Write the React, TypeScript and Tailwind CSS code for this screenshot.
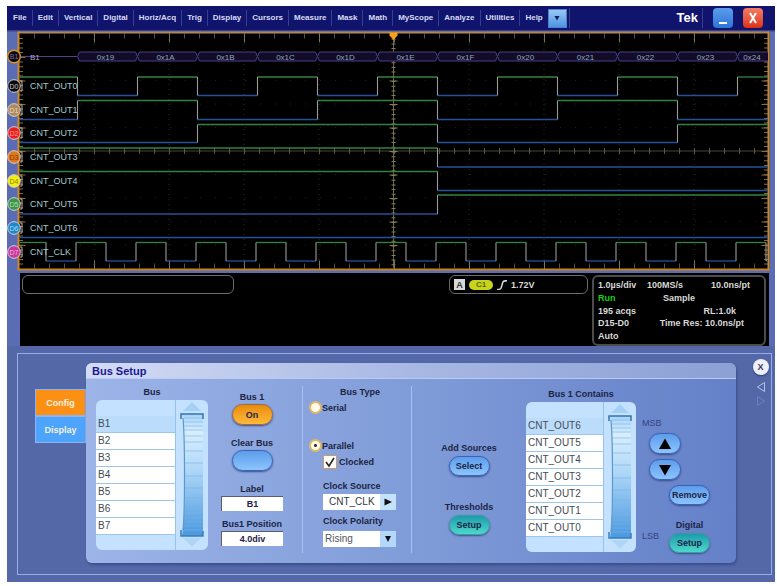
import React, { useState } from "react";

const MENUS = [
  "File", "Edit", "Vertical", "Digital", "Horiz/Acq", "Trig", "Display", "Cursors",
  "Measure", "Mask", "Math", "MyScope", "Analyze", "Utilities", "Help",
];

const LEFT = 20;
const RIGHT = 768;

type Channel = {
  id: string;
  label: string;
  y: number;
  fill: string;
  ink: string;
  high: number;
  low: number;
  startHigh: boolean;
  edges: number[];
};

const every = (start: number, step: number, count: number) =>
  Array.from({ length: count }, (_, i) => start + i * step);

const CHANNELS: Channel[] = [
  { id: "D0", label: "CNT_OUT0", y: 86, fill: "#0a0a0a", ink: "#c8c8c8", high: 77, low: 95.5, startHigh: true, edges: every(77.5, 60, 12) },
  { id: "D1", label: "CNT_OUT1", y: 110, fill: "#b08a5c", ink: "#ead9bd", high: 100.5, low: 119.5, startHigh: false, edges: every(77.5, 120, 6) },
  { id: "D2", label: "CNT_OUT2", y: 133, fill: "#e8201c", ink: "#ff9a90", high: 124.5, low: 142.5, startHigh: false, edges: every(197.5, 240, 3) },
  { id: "D3", label: "CNT_OUT3", y: 157, fill: "#e07818", ink: "#8a3c00", high: 148, low: 167, startHigh: true, edges: [437.5] },
  { id: "D4", label: "CNT_OUT4", y: 181, fill: "#f4ee10", ink: "#8a8400", high: 171.5, low: 190.5, startHigh: true, edges: [437.5] },
  { id: "D5", label: "CNT_OUT5", y: 204, fill: "#3c9448", ink: "#b0e0b0", high: 195, low: 214, startHigh: false, edges: [437.5] },
  { id: "D6", label: "CNT_OUT6", y: 228, fill: "#1c88c8", ink: "#a8dcf8", high: 218, low: 237.5, startHigh: false, edges: [] },
  { id: "D7", label: "CNT_CLK", y: 252, fill: "#c8389c", ink: "#f4b0e0", high: 242.5, low: 261, startHigh: true, edges: every(46, 30, 25) },
];

const BUS_VALUES = ["0x19", "0x1A", "0x1B", "0x1C", "0x1D", "0x1E", "0x1F", "0x20", "0x21", "0x22", "0x23", "0x24"];

function Trace({ ch }: { ch: Channel }) {
  const xs = [LEFT, ...ch.edges, RIGHT];
  return (
    <g fill="none">
      {xs.slice(0, -1).map((x, i) => {
        const high = i % 2 === 0 ? ch.startHigh : !ch.startHigh;
        const y = high ? ch.high : ch.low;
        return <path key={x} d={`M${x} ${y}H${xs[i + 1]}`} stroke={high ? "#37803f" : "#27509a"} strokeWidth="1.3" />;
      })}
      {ch.edges.map((x) => (
        <path key={x} d={`M${x} ${ch.high}V${ch.low}`} stroke="#9a9a9a" strokeWidth="1.1" />
      ))}
    </g>
  );
}

function Graticule() {
  return (
    <g fill="none">
      {every(94, 75, 9).map((x) => (
        <path key={x} d={`M${x} 34V268`} stroke="#2c2c22" strokeDasharray="1 4" />
      ))}
      {every(57, 23.5, 9).map((y) => (
        <path key={y} d={`M20 ${y}H768`} stroke="#24201a" strokeDasharray="1 14" />
      ))}
      <path d="M20 151H768" stroke="#5c5840" strokeWidth="0.8" />
      <path d="M393.5 34V268" stroke="#6c6644" strokeWidth="1" />
      <path d="M20 151H768" stroke="#5c5846" strokeWidth="6" strokeDasharray="1 14" strokeDashoffset="-14" />
      <path d="M393.5 34V268" stroke="#857e56" strokeWidth="4" strokeDasharray="1 3.7" />
      <path d="M393.5 57V268" stroke="#857e56" strokeWidth="8" strokeDasharray="1 22.5" />
      <path d="M34 36H768M34 266H768" stroke="#57533f" strokeWidth="5" strokeDasharray="1 14" />
      <path d="M94 38H768M94 265H768" stroke="#7a755c" strokeWidth="9" strokeDasharray="1 74" />
      <path d="M21 38V268M766 38V268" stroke="#8a6c38" strokeWidth="4" strokeDasharray="1 3.7" />
      <path d="M22 57V268M765 57V268" stroke="#8a6c38" strokeWidth="7" strokeDasharray="1 22.5" />
    </g>
  );
}

function Waveforms() {
  return (
    <svg viewBox="7 30 768 243" className="block w-full bg-[#5a6cb4] font-['Liberation_Sans',Arial,sans-serif]" role="img" aria-label="Digital channels">
      <rect x="7" y="30" width="768" height="1.5" fill="#3a4088" />
      <rect x="18.5" y="32.5" width="751" height="237" fill="#000" />
      <Graticule />
      <path d="M18.5 32.5H769" stroke="#b0875a" strokeWidth="2" />
      <path d="M18.5 31.5V270M768.5 31.5V270" stroke="#c98a2c" strokeWidth="2" />
      <path d="M17.5 269.5H769.5" stroke="#c8841c" strokeWidth="2" />
      <path d="M389.5 32.5h8v3l-4 4.5l-4-4.5z" fill="#f8a018" />

      <path d="M20 56.5H77" stroke="#5c3c8c" strokeWidth="1.2" />
      {BUS_VALUES.map((v, i) => {
        const x = 77.5 + i * 60;
        const end = Math.min(x + 60, RIGHT);
        const last = i === BUS_VALUES.length - 1;
        return (
          <g key={v}>
            <path
              d={last ? `M${end} 52H${x + 2}L${x} 56.5L${x + 2} 61H${end}` : `M${x} 56.5L${x + 2} 52H${end - 2}L${end} 56.5L${end - 2} 61H${x + 2}Z`}
              fill="#120c28"
              stroke="#4a3e90"
            />
            <text x={last ? 752 : x + 28} y="59.5" textAnchor="middle" fontSize="8" fill="#8fa5b5">{v}</text>
          </g>
        );
      })}
      <text x="30" y="60" fontSize="8" fill="#a9a4cc">B1</text>

      {CHANNELS.map((ch) => <Trace key={ch.id} ch={ch} />)}
      {CHANNELS.map((ch) => (
        <g key={ch.id}>
          <path d={`M20 ${ch.y - 5}h2v10h-2`} stroke="#b8b0a0" fill="none" />
          <circle cx="14" cy={ch.y} r="6.3" fill={ch.fill} stroke="#d8d0d4" strokeWidth="1" />
          <text x="14" y={ch.y + 2.5} textAnchor="middle" fontSize="7" fill={ch.ink}>{ch.id}</text>
          <text x="30" y={ch.y + 3} fontSize="9" fill="#a4c8d0">{ch.label}</text>
        </g>
      ))}
      <circle cx="14" cy="56.5" r="6.3" fill="#0a0a10" stroke="#e0941c" strokeWidth="1.4" />
      <text x="14" y="59" textAnchor="middle" fontSize="7" fill="#8468a8">B1</text>
    </svg>
  );
}

function Wheel() {
  return (
    <svg viewBox="0 0 33 150" className="block w-full" aria-hidden="true">
      <defs>
        <linearGradient id="wheel" x1="0" y1="0" x2="0" y2="1">
          <stop offset="0" stopColor="#a8d4f8" />
          <stop offset="0.15" stopColor="#d8eefe" />
          <stop offset="0.45" stopColor="#b0d8f8" />
          <stop offset="1" stopColor="#4a98e0" />
        </linearGradient>
      </defs>
      <path d="M0.5 0V150" stroke="#94c4ee" />
      <path d="M17 2L26 11H8Z" fill="#a4d0f4" />
      <path d="M17 147L26 138H8Z" fill="#b0d6f6" />
      <path d="M7 14H28V136H7C11 110 11 40 7 14Z" fill="url(#wheel)" />
      {[18, 22, 26, 30, 36, 42, 51, 63, 76, 88, 98, 108, 113, 118, 122, 126, 130].map((y) => (
        <path key={y} d={`M9 ${y}H28`} stroke="#7ab4e6" strokeWidth="0.6" />
      ))}
      <path d="M6 19V14H28V19" fill="none" stroke="#3674a8" strokeWidth="1.5" />
      <path d="M8 18C10 40 10 110 8 130" fill="none" stroke="#5c98c8" strokeWidth="1.2" />
      <path d="M6 130V136H28V131" fill="none" stroke="#3a7cb8" strokeWidth="1.5" />
    </svg>
  );
}

function PickList({ title, items }: { title: string; items: string[] }) {
  const [selected, setSelected] = useState(0);
  return (
    <section>
      <h3 className="text-center font-bold">{title}</h3>
      <div className="mt-0.5 flex h-[150px] overflow-hidden rounded-md bg-[#c4e2ff]">
        <ul className="min-w-0 flex-1 pt-4 text-[10px] text-[#444c54]">
          {items.map((item, i) => (
            <li key={item}>
              <button
                type="button"
                aria-pressed={i === selected}
                onClick={() => setSelected(i)}
                className={`block h-[17px] w-full border-b border-[#9cc6ea] pl-0.5 text-left leading-4 ${i === selected ? "bg-[#bcdcfc]" : "bg-white"}`}
              >
                {item}
              </button>
            </li>
          ))}
        </ul>
        <div className="w-[33px] shrink-0">
          <Wheel />
        </div>
      </div>
    </section>
  );
}

function Pill({ children, look, label }: { children?: React.ReactNode; look: string; label?: string }) {
  return (
    <button
      type="button"
      aria-label={label}
      className={`flex shrink-0 items-center justify-center rounded-full border font-bold shadow-[0_1px_2px_#3c4c8c] ${look}`}
    >
      {children}
    </button>
  );
}

const BLUE = "border-[#3c62b4] bg-linear-to-b from-[#5c9cec] to-[#8cc4fc]";
const TEAL = "border-[#3c9c9c] bg-linear-to-b from-[#1c9cac] to-[#4cd8cc]";
const FIELD = "h-[15px] w-[62px] border-t border-l border-[#5c5c6c] bg-white text-center text-[9px] font-bold";
const RADIO =
  "size-[13px] shrink-0 appearance-none rounded-full border-2 border-[#e0b868] bg-[#fffbe8] checked:bg-[radial-gradient(circle,#303030_0_1px,#fffbe8_2px)]";

function BusSettings() {
  return (
    <div className="flex min-w-0 flex-col items-center pt-[5px] pr-1.5">
      <span className="font-bold">Bus 1</span>
      <Pill look="mt-px h-[21px] w-[41px] border-[#9c6c3c] bg-linear-to-b from-[#e88c08] to-[#ffb838]">On</Pill>
      <span className="mt-3 font-bold">Clear Bus</span>
      <Pill label="Clear Bus" look={`mt-px h-[21px] w-[41px] ${BLUE}`} />
      <label htmlFor="bus-label" className="mt-3 font-bold">Label</label>
      <input id="bus-label" defaultValue="B1" className={`mt-px ${FIELD}`} />
      <label htmlFor="bus-position" className="mt-[7px] font-bold whitespace-nowrap">Bus1 Position</label>
      <input id="bus-position" defaultValue="4.0div" className={`mt-px ${FIELD}`} />
    </div>
  );
}

function BusType() {
  return (
    <div role="radiogroup" aria-labelledby="bus-type" className="min-w-0 border-l border-[#a8c0f0] pl-1.5">
      <h3 id="bus-type" className="text-center font-bold">Bus Type</h3>
      <label className="mt-[3px] flex h-[13px] items-center font-bold">
        <input type="radio" name="bus-type" className={RADIO} />
        Serial
      </label>
      <label className="mt-[25px] flex h-[13px] items-center font-bold">
        <input type="radio" name="bus-type" defaultChecked className={RADIO} />
        Parallel
      </label>
      <div className="pl-3.5">
        <label className="mt-[3px] flex h-3.5 items-center gap-0.5 font-bold">
          <span className="grid size-3.5 shrink-0">
            <input type="checkbox" defaultChecked className="peer col-start-1 row-start-1 size-3.5 appearance-none border border-[#c89c6c] bg-[#fffcf4]" />
            <svg viewBox="0 0 14 14" className="pointer-events-none invisible col-start-1 row-start-1 size-3.5 peer-checked:visible" aria-hidden="true">
              <path d="M3 7L6 11L11 3" fill="none" stroke="#282828" strokeWidth="1.6" />
            </svg>
          </span>
          Clocked
        </label>
        <div id="clock-source" className="mt-[11px] font-bold">Clock Source</div>
        <button type="button" aria-describedby="clock-source" className="mt-0.5 flex h-4 w-[73px] items-center bg-white pl-1.5 text-[10px] text-[#303840]">
          <span className="flex-1 text-left">CNT_CLK</span>
          <span className="flex h-full w-4 items-center justify-center bg-[#c4e2fc]">
            <svg viewBox="0 0 8 8" className="size-2" aria-hidden="true"><path d="M0.5 0.5L8 4L0.5 7.5Z" fill="#111" /></svg>
          </span>
        </button>
        <label htmlFor="clock-polarity" className="mt-[5px] block font-bold">Clock Polarity</label>
        <div className="relative mt-1 h-4 w-[73px] bg-white">
          <select id="clock-polarity" defaultValue="Rising" className="block h-4 w-full appearance-none bg-transparent pl-0.5 text-[10px] leading-4 text-[#505860]">
            <option>Rising</option>
            <option>Falling</option>
          </select>
          <span className="pointer-events-none absolute inset-y-0 right-0 flex w-4 items-center justify-center bg-[#b4d8fc]">
            <svg viewBox="0 0 8 8" className="size-2" aria-hidden="true"><path d="M1 1H7L4 7Z" fill="#111" /></svg>
          </span>
        </div>
      </div>
    </div>
  );
}

function SourceActions() {
  return (
    <div className="flex min-w-0 flex-col items-center border-l border-[#a8c0f0] pt-14">
      <span className="font-bold">Add Sources</span>
      <Pill look={`mt-0.5 h-5 w-[41px] ${BLUE}`}>Select</Pill>
      <span className="mt-[25px] font-bold">Thresholds</span>
      <Pill look={`mt-0.5 h-5 w-[41px] ${TEAL}`}>Setup</Pill>
    </div>
  );
}

function OrderActions() {
  return (
    <div className="min-w-0 pt-[31px] pl-1.5">
      <div className="text-[#34447c]">MSB</div>
      <div className="mt-1 flex flex-col gap-[5px] pl-[7px]">
        <Pill label="Move up" look={`h-[21px] w-8 ${BLUE}`}>
          <svg viewBox="0 0 12 12" className="size-3" aria-hidden="true"><path d="M6 0.5L12 11H0Z" fill="#000" /></svg>
        </Pill>
        <Pill label="Move down" look={`h-[21px] w-8 ${BLUE}`}>
          <svg viewBox="0 0 12 12" className="size-3" aria-hidden="true"><path d="M6 11.5L12 1H0Z" fill="#000" /></svg>
        </Pill>
      </div>
      <div className="mt-[5px] pl-[27px]">
        <Pill look={`h-5 w-[41px] ${BLUE}`}>Remove</Pill>
      </div>
      <div className="mt-3.5 flex">
        <span className="w-[27px] pt-[11px] text-[#34447c]">LSB</span>
        <div className="flex flex-col items-center">
          <span className="font-bold">Digital</span>
          <Pill look={`mt-0.5 h-5 w-[41px] ${TEAL}`}>Setup</Pill>
        </div>
      </div>
    </div>
  );
}

function MenuBar() {
  return (
    <header className="flex h-6 items-center bg-[#10146c] pl-px text-[8px] font-bold text-[#d8dcf4]">
      <nav className="flex">
        {MENUS.map((m) => (
          <button key={m} type="button" className="h-4 border-r border-[#34408c] px-[5px] last:border-0">{m}</button>
        ))}
      </nav>
      <button type="button" aria-label="More menus" className="flex size-[19px] items-center justify-center border border-[#4c84cc] bg-linear-to-b from-[#98c8f4] to-[#4c94e0]">
        <svg viewBox="0 0 8 8" className="size-2" aria-hidden="true"><path d="M1.5 2H6.5L4 6.5Z" fill="#101c5c" /></svg>
      </button>
      <span className="ml-0.5 h-5 border-l border-[#34408c]" />
      <span className="ml-auto text-[13px] text-white">Tek</span>
      <span className="ml-1 h-5 border-l border-[#34408c]" />
      <button type="button" aria-label="Minimize" className="ml-2.5 flex size-5 items-end justify-center rounded-sm bg-linear-to-b from-[#5c9cec] to-[#2c74d8] pb-1">
        <span className="h-0.5 w-2 bg-white" />
      </button>
      <button type="button" aria-label="Close" className="mr-3 ml-2.5 flex size-5 items-center justify-center rounded-sm bg-linear-to-b from-[#f47c64] to-[#dc2c14]">
        <svg viewBox="0 0 12 12" className="size-3" aria-hidden="true"><path d="M3 1L9 11M9 1L3 11" stroke="#fff" strokeWidth="2" /></svg>
      </button>
    </header>
  );
}

function Readouts() {
  return (
    <div className="bg-[#5a6cb4] pr-1.5 pl-[13px]">
      <div className="flex h-[73px] items-start gap-1 bg-black pt-0.5 pr-[3px] pl-0.5 text-[9px] leading-3 font-bold text-[#d8d8d8]">
        <div className="h-[19px] w-[212px] rounded-md border border-[#6c6c6c]" />
        <div className="ml-auto flex h-[19px] w-[139px] items-center gap-1 rounded-md border border-[#6c6c6c] pl-1">
          <span className="flex size-[11px] items-center justify-center bg-[#d8d8d8] text-[#303030]">A</span>
          <span className="flex h-2.5 w-6 items-center justify-center rounded-full bg-[#c8d41c] text-[8px] text-[#5c6404]">C1</span>
          <svg viewBox="0 0 10 10" className="size-2.5" aria-hidden="true"><path d="M0 9.500C4 9.500 4 9 5 5C6 1 6 0.700 10 0.700" fill="none" stroke="#d8d8d8" strokeWidth="1.500" /></svg>
          <span>1.72V</span>
        </div>
        <div className="flex h-[71px] w-[174px] flex-col justify-between rounded-md border-2 border-[#4c4c4c] px-1 py-0.5 whitespace-nowrap">
          <div className="flex"><span className="w-[49px]">1.0µs/div</span><span>100MS/s</span><span className="ml-auto pr-2.5">10.0ns/pt</span></div>
          <div className="flex"><span className="w-[65px] text-[#10d010]">Run</span><span>Sample</span></div>
          <div className="flex justify-between pr-6"><span>195 acqs</span><span>RL:1.0k</span></div>
          <div className="flex justify-between pr-4"><span>D15-D0</span><span>Time Res: 10.0ns/pt</span></div>
          <div>Auto</div>
        </div>
      </div>
    </div>
  );
}

export default function App() {
  const tab = "h-[27px] border border-[#8cb4f4] text-center font-bold text-[#f4f0e0]";
  return (
    <div className="bg-white pt-1.5 pr-0.5 pl-[7px] font-['Liberation_Sans',Arial,sans-serif]">
      <MenuBar />
      <Waveforms />
      <Readouts />
      <main className="bg-[#5468a8] pt-[7px] pr-[3px] pb-[7px] pl-2.5 text-[9px] leading-3 text-[#1c2444]">
        <div className="flex items-start border border-[#98acec] pt-[9px] pb-[11px] pl-[17px]">
          <nav className="mt-[26px] flex w-[51px] flex-col">
            <button type="button" className={`${tab} bg-[#fc9014]`}>Config</button>
            <button type="button" className={`${tab} bg-[#4ca4fc]`}>Display</button>
          </nav>
          <section className="min-w-0 flex-1 overflow-hidden rounded-md bg-linear-to-r from-[#9cb4e8] via-[#809cd8] to-[#6480c8] shadow-[1px_2px_3px_#3c4c8c]">
            <h2 className="h-4 border-b border-[#b8ccf4] bg-linear-to-r from-[#d4dcf4] via-[#a8b8e4] to-[#8ca0d4] pl-1.5 text-[11px] leading-4 font-bold text-[#181894]">
              Bus Setup
            </h2>
            <div className="grid grid-cols-[122fr_94fr_109fr_115fr_110fr_100fr] pt-[7px] pb-2.5">
              <div className="min-w-0 pl-2.5">
                <PickList title="Bus" items={["B1", "B2", "B3", "B4", "B5", "B6", "B7"]} />
              </div>
              <BusSettings />
              <BusType />
              <SourceActions />
              <div className="min-w-0 pt-0.5">
                <PickList
                  title="Bus 1 Contains"
                  items={["CNT_OUT6", "CNT_OUT5", "CNT_OUT4", "CNT_OUT3", "CNT_OUT2", "CNT_OUT1", "CNT_OUT0"]}
                />
              </div>
              <OrderActions />
            </div>
          </section>
          <div className="-mt-1 flex w-[35px] flex-col items-center pl-3.5">
            <button type="button" aria-label="Close panel" className="flex size-4 items-center justify-center rounded-full bg-[#f0f0f8] text-[9px] font-bold text-[#34386c] shadow-[0_1px_2px_#2c3c7c]">X</button>
            <button type="button" aria-label="Previous" className="mt-1.5">
              <svg viewBox="0 0 10 12" className="block h-3 w-2.5" aria-hidden="true"><path d="M8.5 1.5V10.5L1.5 6Z" fill="none" stroke="#b4c0ec" /></svg>
            </button>
            <button type="button" aria-label="Next" className="mt-0.5">
              <svg viewBox="0 0 10 12" className="block h-3 w-2.5" aria-hidden="true"><path d="M1.5 1.5V10.5L8.5 6Z" fill="none" stroke="#6c80c0" /></svg>
            </button>
          </div>
        </div>
      </main>
    </div>
  );
}
